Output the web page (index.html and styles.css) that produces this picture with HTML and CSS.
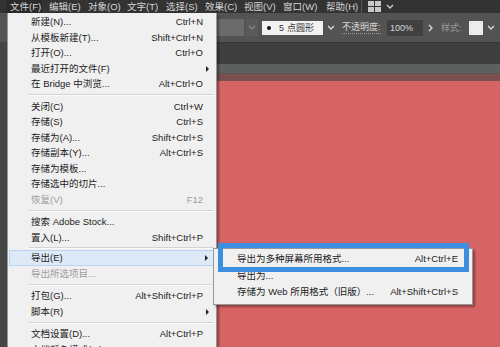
FILE: index.html
```html
<!DOCTYPE html>
<html lang="zh-CN">
<head>
    <meta charset="UTF-8">
    <title>文件菜单 - 导出</title>
    <link rel="stylesheet" href="styles.css">
</head>
<body>

    <div class="app">
        <!-- Menu bar -->
        <div class="menubar">
            <span class="mb-item open">文件(F)</span>
            <span class="mb-item">编辑(E)</span>
            <span class="mb-item">对象(O)</span>
            <span class="mb-item">文字(T)</span>
            <span class="mb-item">选择(S)</span>
            <span class="mb-item">效果(C)</span>
            <span class="mb-item">视图(V)</span>
            <span class="mb-item wide">窗口(W)</span>
            <span class="mb-item">帮助(H)</span>
            <span class="mb-sep"></span>
            <svg class="mb-ws" width="13" height="11" viewBox="0 0 13 11">
                <rect x="0" y="0" width="6" height="5" fill="#c8c8c8"/>
                <rect x="7" y="0" width="6" height="5" fill="#c8c8c8"/>
                <rect x="0" y="6" width="6" height="5" fill="#c8c8c8"/>
                <rect x="7" y="6" width="6" height="5" fill="#c8c8c8"/>
            </svg>
            <svg class="mb-chev" width="8" height="5" viewBox="0 0 8 5">
                <path d="M1 1 L4 4 L7 1" fill="none" stroke="#d0d0d0" stroke-width="1.3"/>
            </svg>
        </div>

        <!-- Control bar -->
        <div class="optionsbar">
            <div class="opt-field"></div>
            <div class="opt-drop">
                <svg width="8" height="5" viewBox="0 0 8 5"><path d="M1 1 L4 4 L7 1" fill="none" stroke="#8a8a8a" stroke-width="1.2"/></svg>
            </div>
            <div class="opt-brush">
                <span class="dot"></span>
                <span class="brush-size">5</span>
                <span>点圆形</span>
            </div>
            <svg class="opt-chev" width="8" height="5" viewBox="0 0 8 5"><path d="M1 1 L4 4 L7 1" fill="none" stroke="#dcdcdc" stroke-width="1.3"/></svg>
            <span class="opt-label">不透明度:</span>
            <div class="opt-num">100%</div>
            <svg class="opt-next" width="5" height="8" viewBox="0 0 5 8"><path d="M1 1 L4 4 L1 7" fill="none" stroke="#dcdcdc" stroke-width="1.3"/></svg>
            <span class="opt-label dim">样式:</span>
            <div class="opt-swatch"></div>
            <svg class="opt-chev" width="8" height="5" viewBox="0 0 8 5"><path d="M1 1 L4 4 L7 1" fill="none" stroke="#dcdcdc" stroke-width="1.3"/></svg>
        </div>

        <!-- Document area -->
        <div class="work">
            <div class="toolstrip"></div>
            <div class="docarea">
                <div class="tabbar"></div>
                <div class="ruler-top"></div>
                <div class="ruler-edge"></div>
                <div class="canvas"></div>
            </div>
        </div>
    </div>

    <!-- File menu -->
    <div class="menu">
        <div class="mi"><span>新建(N)...</span><span class="sc">Ctrl+N</span></div>
        <div class="mi"><span>从模板新建(T)...</span><span class="sc">Shift+Ctrl+N</span></div>
        <div class="mi"><span>打开(O)...</span><span class="sc">Ctrl+O</span></div>
        <div class="mi"><span>最近打开的文件(F)</span><span class="arrow"></span></div>
        <div class="mi"><span>在 Bridge 中浏览...</span><span class="sc">Alt+Ctrl+O</span></div>
        <div class="msep"></div>
        <div class="mi"><span>关闭(C)</span><span class="sc">Ctrl+W</span></div>
        <div class="mi"><span>存储(S)</span><span class="sc">Ctrl+S</span></div>
        <div class="mi"><span>存储为(A)...</span><span class="sc">Shift+Ctrl+S</span></div>
        <div class="mi"><span>存储副本(Y)...</span><span class="sc">Alt+Ctrl+S</span></div>
        <div class="mi"><span>存储为模板...</span></div>
        <div class="mi"><span>存储选中的切片...</span></div>
        <div class="mi disabled"><span>恢复(V)</span><span class="sc">F12</span></div>
        <div class="msep"></div>
        <div class="mi"><span>搜索 Adobe Stock...</span></div>
        <div class="mi"><span>置入(L)...</span><span class="sc">Shift+Ctrl+P</span></div>
        <div class="msep short"></div>
        <div class="mi active"><span>导出(E)</span><span class="arrow"></span></div>
        <div class="mi disabled"><span>导出所选项目...</span></div>
        <div class="msep"></div>
        <div class="mi"><span>打包(G)...</span><span class="sc">Alt+Shift+Ctrl+P</span></div>
        <div class="mi"><span>脚本(R)</span><span class="arrow"></span></div>
        <div class="msep"></div>
        <div class="mi"><span>文档设置(D)...</span><span class="sc">Alt+Ctrl+P</span></div>
        <div class="mi"><span>文档颜色模式(M)</span><span class="arrow"></span></div>
    </div>

    <!-- Export submenu -->
    <div class="submenu">
        <div class="mi"><span>导出为多种屏幕所用格式...</span><span class="sc">Alt+Ctrl+E</span></div>
        <div class="mi"><span>导出为...</span></div>
        <div class="mi"><span>存储为 Web 所用格式（旧版）...</span><span class="sc">Alt+Shift+Ctrl+S</span></div>
    </div>

    <!-- Highlight frame -->
    <div class="callout"></div>

</body>
</html>
```

FILE: styles.css
```css
body {
    margin: 0;
    width: 500px;
    height: 347px;
    overflow: hidden;
    background-color: #444;
    font-family: "Liberation Sans", "Noto Sans CJK SC", sans-serif;
    font-size: 9.5px;
}

.app {
    display: flex;
    flex-direction: column;
    height: 347px;
}

/* Menu bar */
.menubar {
    height: 13px;
    background-color: #333;
    color: #d6d6d6;
    display: flex;
    align-items: center;
    padding-left: 6px;
}

.mb-item {
    flex: 0 0 39px;
    box-sizing: border-box;
    padding-left: 4px;
    line-height: 13px;
    white-space: nowrap;
}

.mb-item.wide {
    flex-basis: 43px;
}

.mb-item.open {
    flex-basis: 36px;
    margin-right: 3px;
    background-color: #2a2a2a;
}

.mb-sep {
    width: 1px;
    height: 13px;
    background-color: #555;
}

.mb-ws {
    margin-left: 6px;
}

.mb-chev {
    margin-left: 5px;
}

/* Control bar */
.optionsbar {
    height: 29px;
    background-color: #535353;
    display: flex;
    align-items: center;
    color: #d8d8d8;
}

.opt-field {
    width: 54px;
    height: 17px;
    margin-left: 190px;
    background-color: #6b6b6b;
}

.opt-drop {
    width: 12px;
    height: 17px;
    margin-left: 2px;
    background-color: #5a5a5a;
    display: flex;
    align-items: center;
    justify-content: center;
}

.opt-brush {
    width: 61px;
    height: 14px;
    margin-left: 4px;
    background-color: #f2f2f2;
    color: #333;
    display: flex;
    align-items: center;
    font-size: 9px;
}

.opt-brush .dot {
    width: 4px;
    height: 4px;
    border-radius: 50%;
    background-color: #111;
    margin-left: 5px;
}

.opt-brush .brush-size {
    margin: 0 3px 0 8px;
}

.opt-chev {
    margin-left: 4px;
}

.opt-label {
    flex: 0 0 39px;
    margin-left: 7px;
    font-size: 9px;
    white-space: nowrap;
    overflow: hidden;
    border-bottom: 1px dotted #999;
    line-height: 12px;
}

.opt-label.dim {
    flex-basis: 20px;
    margin-left: 8px;
    color: #9a9a9a;
    border-bottom: none;
}

.opt-num {
    width: 33px;
    height: 16px;
    margin-left: 6px;
    background-color: #404040;
    line-height: 16px;
    padding-left: 3px;
    font-size: 9px;
}

.opt-next {
    margin-left: 5px;
}

.opt-swatch {
    width: 14px;
    height: 14px;
    margin-left: 8px;
    background-color: #ececec;
}

/* Document area */
.work {
    flex: 1;
    display: flex;
}

.toolstrip {
    width: 7px;
    background-color: #464646;
}

.docarea {
    flex: 1;
    display: flex;
    flex-direction: column;
}

.tabbar {
    height: 21px;
    background-color: #3f3f3f;
    border-top: 1px solid #363636;
}

.ruler-top {
    height: 9px;
    background-color: #5d605f;
    border-bottom: 1px solid #545655;
}

.ruler-edge {
    height: 7px;
    background-color: #7b4e4f;
}

.canvas {
    flex: 1;
    background-color: #d76464;
}

/* Dropdown menus */
.menu, .submenu {
    position: absolute;
    background-color: #f0f0f0;
    border: 1px solid #979797;
    color: #1c1c1c;
    box-shadow: 2px 2px 2px rgba(0, 0, 0, 0.35);
}

.menu {
    left: 7px;
    top: 13px;
    width: 208px;
    height: 340px;
    padding-top: 1px;
    border-top: none;
}

.submenu {
    left: 213px;
    top: 248px;
    width: 258px;
    padding: 2px 0 3px;
}

.mi {
    height: 15.5px;
    line-height: 15.5px;
    display: flex;
    align-items: center;
    justify-content: space-between;
    padding: 0 13px 0 23px;
    position: relative;
    white-space: nowrap;
}

.submenu .mi {
    height: 16.5px;
    line-height: 16.5px;
    padding: 0 14px 0 23px;
}

.mi.disabled {
    color: #9c9c9c;
}

.mi.active {
    background-color: #dde9f6;
    box-shadow: inset 0 0 0 1px #b9d3f0;
    margin: 0 1px;
    padding: 0 12px 0 22px;
}

.arrow {
    position: absolute;
    right: 7px;
    top: 5px;
    width: 0;
    height: 0;
    border-left: 3px solid #222;
    border-top: 3px solid transparent;
    border-bottom: 3px solid transparent;
}

.msep {
    height: 7px;
    margin: 0 2px 0 21px;
    display: flex;
    align-items: center;
}

.msep::after {
    content: "";
    flex: 1;
    height: 1px;
    background-color: #d4d4d4;
    border-bottom: 1px solid #fbfbfb;
}

.msep.short {
    height: 5px;
}

/* Blue annotation frame */
.callout {
    position: absolute;
    left: 218px;
    top: 243px;
    width: 241px;
    height: 19px;
    border: 5px solid #3b8ee0;
}
```
